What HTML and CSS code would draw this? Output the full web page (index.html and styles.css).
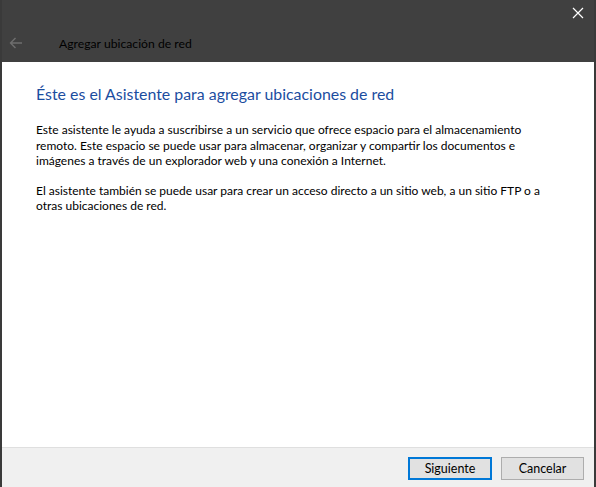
FILE: index.html
```html
<!DOCTYPE html>
<html lang="es">
<head>
  <meta charset="UTF-8">
  <meta name="viewport" content="width=device-width, initial-scale=1.0">
  <title>Agregar ubicación de red</title>
  <link rel="stylesheet" href="styles.css">
</head>
<body>
  <div class="window">
    <div class="titlebar">
      <div class="topline">
        <span class="close">
          <svg width="12" height="12" viewBox="0 0 12 12"><path d="M1 1L11 11M11 1L1 11" stroke="#fff" stroke-width="1.2"/></svg>
        </span>
      </div>
      <div class="navline">
        <span class="back">
          <svg width="14" height="12" viewBox="0 0 14 12"><path d="M13 6H1.5M6.5 1L1.5 6L6.5 11" fill="none" stroke="#6e6e6e" stroke-width="1.4"/></svg>
        </span>
        <span class="wintitle">Agregar ubicación de red</span>
      </div>
    </div>
    <div class="content">
      <h1>Éste es el Asistente para agregar ubicaciones de red</h1>
      <p>Este asistente le ayuda a suscribirse a un servicio que ofrece espacio para el almacenamiento remoto. Este espacio se puede usar para almacenar, organizar y compartir los documentos e imágenes a través de un explorador web y una conexión a Internet.</p>
      <p>El asistente también se puede usar para crear un acceso directo a un sitio web, a un sitio FTP o a otras ubicaciones de red.</p>
    </div>
    <div class="footer">
      <button class="btn primary">Siguiente</button>
      <button class="btn">Cancelar</button>
    </div>
  </div>
</body>
</html>
```

FILE: styles.css
```css
html, body {
  margin: 0;
  height: 100%;
}
body {
  font-family: Lato, "Noto Sans", sans-serif;
  font-size: 12px;
  background: #404040;
}
.window {
  height: 100%;
  display: flex;
  flex-direction: column;
  border-left: 2px solid #3a3a3a;
  border-right: 2px solid #3a3a3a;
  box-sizing: border-box;
}
.titlebar {
  height: 62px;
  background: #404040;
  display: flex;
  flex-direction: column;
}
.topline {
  height: 28px;
  display: flex;
  justify-content: flex-end;
}
.close {
  width: 30px;
  height: 26px;
  display: flex;
  align-items: center;
  justify-content: center;
  margin-right: 1px;
}
.navline {
  height: 30px;
  display: flex;
  align-items: center;
}
.back {
  width: 14px;
  display: flex;
  margin-left: 7px;
}
.wintitle {
  margin-left: 36px;
  font-size: 12.2px;
  color: #000;
}
.content {
  flex: 1;
  background: #fff;
  padding: 22px 34px 0;
}
h1 {
  margin: 0 0 19px;
  font-size: 15.9px;
  font-weight: normal;
  color: #1b4d9f;
}
p {
  margin: 0 0 14px;
  line-height: 15.5px;
  color: #000;
  max-width: 520px;
}
.footer {
  height: 40px;
  box-sizing: border-box;
  background: #f0f0f0;
  border-top: 1px solid #dfdfdf;
  display: flex;
  justify-content: flex-end;
  align-items: flex-start;
  gap: 9px;
  padding: 9px 10px 0 0;
}
.btn {
  font-family: inherit;
  font-size: 12.5px;
  width: 83px;
  height: 23px;
  padding: 0;
  background: #e1e1e1;
  border: 1px solid #adadad;
  color: #000;
}
.btn.primary {
  width: 84px;
  border: 2px solid #0078d7;
}
```
